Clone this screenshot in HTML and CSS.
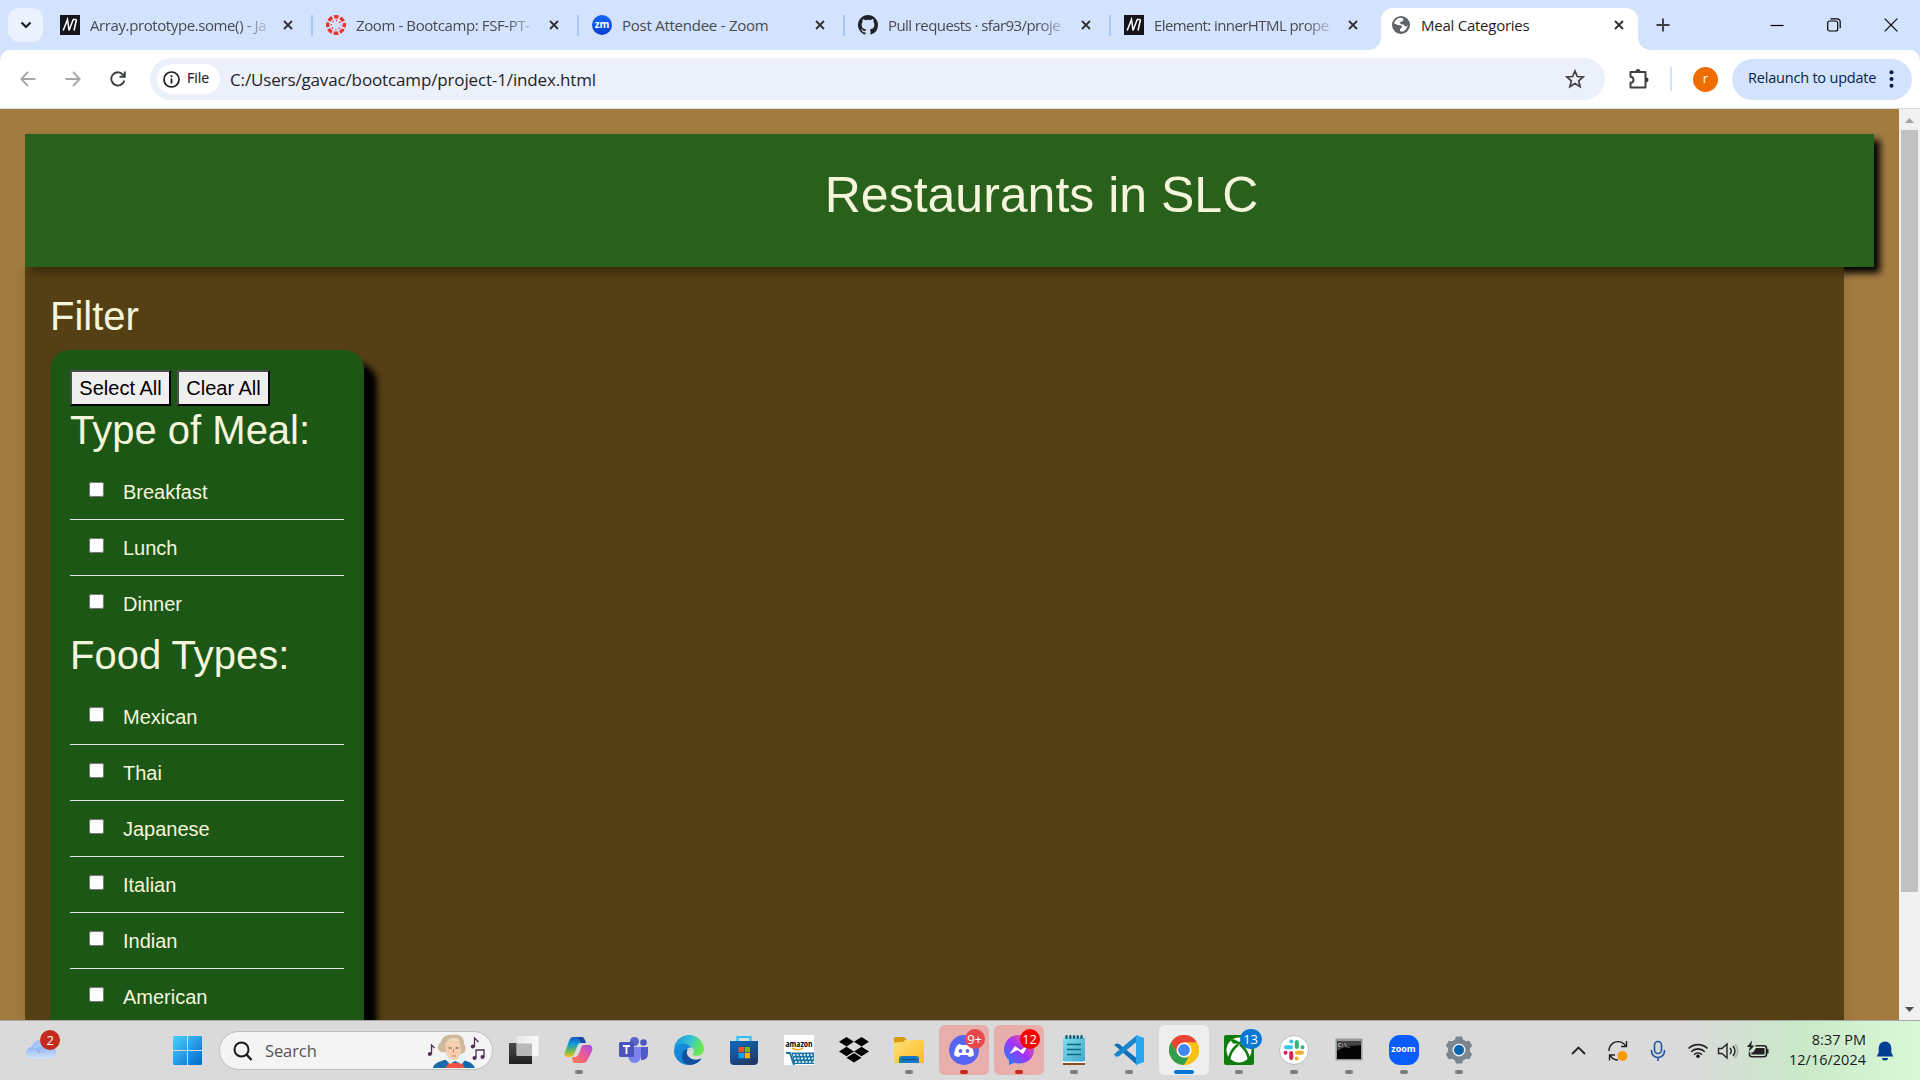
FILE: index.html
```html
<!DOCTYPE html>
<html lang="en">
<head>
<meta charset="utf-8">
<title>Meal Categories</title>
<link rel="stylesheet" href="styles.css">
</head>
<body>
<svg width="0" height="0" class="defs">
  <defs>
    <symbol id="x" viewBox="0 0 10 10"><path d="M1 1l8 8M9 1l-8 8" stroke="currentColor" stroke-width="1.8"/></symbol>
    <symbol id="mdn" viewBox="0 0 20 20"><path fill="#15141a" d="M0 0h20v20H0z"/><path d="M3.200 15.500L7.500 4.500L9 15.500L13.200 4.500M16.500 4.500L14 15.500M12.800 4.500h3.700" fill="none" stroke="#fff" stroke-width="1.5"/></symbol>
    <linearGradient id="win" x1="0" y1="0" x2="1" y2="1"><stop offset="0" stop-color="#4cd0fb"/><stop offset="1" stop-color="#0069d0"/></linearGradient>
    <linearGradient id="cloud" x1="0" y1="0" x2="0" y2="1"><stop offset="0" stop-color="#84aef0"/><stop offset="1" stop-color="#d5e4fc"/></linearGradient>
    <linearGradient id="cloud2" x1="0" y1="0" x2="1" y2="1"><stop offset="0" stop-color="#8fb4ef"/><stop offset="1" stop-color="#cfe0fb"/></linearGradient>
    <linearGradient id="tvb" x1="0" y1="0" x2="0" y2="1"><stop offset="0" stop-color="#4a4a4a"/><stop offset="1" stop-color="#202020"/></linearGradient>
    <linearGradient id="tv" x1="0" y1="0" x2="1" y2="0"><stop offset="0" stop-color="#e8e8e8"/><stop offset="1" stop-color="#fafafa"/></linearGradient>
    <linearGradient id="cpa" x1="0" y1="0" x2="0" y2="1"><stop offset="0" stop-color="#1857c9"/><stop offset=".35" stop-color="#159bd8"/><stop offset=".7" stop-color="#6fbd54"/><stop offset="1" stop-color="#f4c51c"/></linearGradient>
    <linearGradient id="cpb" x1="1" y1="0" x2="0" y2="1"><stop offset="0" stop-color="#a34de8"/><stop offset=".5" stop-color="#ea5b9b"/><stop offset="1" stop-color="#ff8038"/></linearGradient>
    <linearGradient id="edg" x1="0" y1="0" x2="1" y2=".3"><stop offset="0" stop-color="#168fd6"/><stop offset=".55" stop-color="#35c1d8"/><stop offset="1" stop-color="#6bea50"/></linearGradient>
    <linearGradient id="edb" x1="0" y1="0" x2="1" y2="1"><stop offset="0" stop-color="#1894e0"/><stop offset="1" stop-color="#0c6bc8"/></linearGradient>
    <linearGradient id="sto" x1="0" y1="0" x2=".6" y2="1"><stop offset="0" stop-color="#0a6bc2"/><stop offset="1" stop-color="#223a6a"/></linearGradient>
    <linearGradient id="fol" x1="0" y1="0" x2="1" y2="1"><stop offset="0" stop-color="#ffe07a"/><stop offset="1" stop-color="#fdbb1f"/></linearGradient>
    <linearGradient id="mes" x1="1" y1="0" x2="0" y2="1"><stop offset="0" stop-color="#ff5f72"/><stop offset=".5" stop-color="#a033ff"/><stop offset="1" stop-color="#0a8dff"/></linearGradient>
    <linearGradient id="note" x1="0" y1="0" x2="1" y2="1"><stop offset="0" stop-color="#7fdcec"/><stop offset="1" stop-color="#3eaacb"/></linearGradient>
  </defs>
</svg>

<header class="tabstrip">
  <div class="tab-search"><svg width="12" height="8" viewBox="0 0 12 8"><path d="M1.500 1.500L6 6l4.500-4.500" fill="none" stroke="#1f1f1f" stroke-width="2.200"/></svg></div>
  <div class="tabs">
    <div class="tab"><svg class="fav"><use href="#mdn"/></svg><span class="tt fade">Array.prototype.some() - Ja</span><svg class="cl"><use href="#x"/></svg></div>
    <div class="tab"><svg class="fav" viewBox="0 0 20 20"><circle cx="10" cy="10" r="8.300" fill="none" stroke="#e9342a" stroke-width="3.400" stroke-dasharray="4.700 1.818" stroke-dashoffset="2.350"/><circle cx="10" cy="10" r="4.600" fill="none" stroke="#e9342a" stroke-width="1.400" stroke-dasharray="1.300 2.313" stroke-dashoffset=".650"/></svg><span class="tt fade">Zoom - Bootcamp: FSF-PT-</span><svg class="cl"><use href="#x"/></svg></div>
    <div class="tab"><span class="fav zm">zm</span><span class="tt wide">Post Attendee - Zoom</span><svg class="cl"><use href="#x"/></svg></div>
    <div class="tab"><svg class="fav" viewBox="0 0 16 16"><path fill="#1f2328" d="M8 0C3.580 0 0 3.580 0 8c0 3.540 2.290 6.530 5.470 7.590.4.070.55-.17.55-.38v-1.340c-2.230.48-2.690-1.070-2.690-1.070-.36-.92-.89-1.170-.89-1.170-.73-.5.060-.49.060-.49.8.060 1.220.830 1.220.830.720 1.230 1.880.870 2.340.670.070-.52.280-.87.510-1.070-1.780-.2-3.640-.89-3.640-3.950 0-.87.310-1.590.820-2.150-.08-.2-.36-1.020.080-2.120 0 0 .67-.21 2.200.820A7.700 7.700 0 018 3.870c.68 0 1.360.090 2 .26 1.530-1.040 2.200-.82 2.200-.82.440 1.100.160 1.920.080 2.120.510.560.820 1.270.820 2.150 0 3.070-1.870 3.750-3.650 3.950.290.250.540.730.540 1.480v2.200c0 .21.150.46.550.38A8 8 0 0016 8c0-4.420-3.580-8-8-8z"/></svg><span class="tt fade tight">Pull requests · sfar93/proje</span><svg class="cl"><use href="#x"/></svg></div>
    <div class="tab last"><svg class="fav"><use href="#mdn"/></svg><span class="tt fade tight">Element: innerHTML prope</span><svg class="cl"><use href="#x"/></svg></div>
    <div class="tab active"><svg class="globe" viewBox="0 0 18 18"><circle cx="9" cy="9" r="9" fill="#5f6368"/><path fill="#fff" d="M8 1.800l3 .4.500 1.800-1.500 1.500-2 .5.500 2 3 .5 1 1.500 2 .5 1.200-1.500c-.3 3-2.500 6-5.700 6.800l-2-.8V13l2-1.500-.5-2L6 9 2 7.500c.6-2.500 2.700-5 6-5.700z"/></svg><span class="tt wide">Meal Categories</span><svg class="cl"><use href="#x"/></svg></div>
  </div>
  <svg class="plus" viewBox="0 0 14 14"><path d="M7 .5v13M.5 7h13" stroke="#3c4043" stroke-width="1.900"/></svg>
  <div class="winctl">
    <svg width="14" height="14"><path d="M.5 7.500h13" stroke="#000" stroke-width="1.200"/></svg>
    <svg width="14" height="14"><rect x=".7" y="3" width="10" height="10" rx="2" fill="none" stroke="#000" stroke-width="1.200"/><path d="M3.500.8h6.700a3 3 0 013 3v6.400" fill="none" stroke="#000" stroke-width="1.200"/></svg>
    <svg width="14" height="14"><path d="M.7.700l12.600 12.600M13.300.700L.7 13.300" stroke="#000" stroke-width="1.200"/></svg>
  </div>
</header>

<nav class="toolbar">
  <div class="navs">
    <svg width="16" height="16"><path d="M15.500 8H1.500M8 1L1.200 8 8 15" fill="none" stroke="#a5a7aa" stroke-width="1.800"/></svg>
    <svg width="16" height="16"><path d="M.5 8h14M8 1l6.800 7L8 15" fill="none" stroke="#a5a7aa" stroke-width="1.800"/></svg>
    <svg width="16" height="16"><path d="M14.300 9.500A6.600 6.600 0 1112.800 3.500L14.300 5M14.800.5v5.300H9.500" fill="none" stroke="#3c4043" stroke-width="1.900"/></svg>
  </div>
  <div class="omnibox">
    <div class="chip"><svg width="17" height="17"><circle cx="8.500" cy="8.500" r="7.500" fill="none" stroke="#1f1f1f" stroke-width="1.700"/><path d="M8.500 7.500v5M8.500 4.300v1.900" stroke="#1f1f1f" stroke-width="1.800"/></svg><span>File</span></div>
    <span class="url">C:/Users/gavac/bootcamp/project-1/index.html</span>
    <svg class="star" viewBox="0 0 20 20"><path d="M10 2l2.300 5.500 5.900.5-4.500 3.900 1.400 5.800L10 14.600l-5.100 3.100 1.400-5.800L1.800 8l5.900-.5z" fill="none" stroke="#3c4043" stroke-width="1.700"/></svg>
  </div>
  <svg class="puzzle" viewBox="0 0 22 22"><path d="M2.500 4h15v15.500h-15v-4.700c4-.3 4-5.800 0-6.100z" fill="none" stroke="#3c4043" stroke-width="2" stroke-linejoin="round"/><path d="M7.500 4a2.500 3 0 015 0zM17.500 9.200a3 2.600 0 010 5.200z" fill="#3c4043"/></svg>
  <i class="sep"></i>
  <div class="avatar">r</div>
  <div class="relaunch"><span>Relaunch to update</span><svg width="5" height="18"><g fill="#041e49"><circle cx="2.500" cy="2.300" r="2"/><circle cx="2.500" cy="9" r="2"/><circle cx="2.500" cy="15.700" r="2"/></g></svg></div>
</nav>

<div class="viewport">
  <div class="page">
    <div class="banner"><h1>Restaurants in SLC</h1></div>
    <main>
      <h2 class="filter-title">Filter</h2>
      <form class="card">
        <div class="buttons"><button type="button">Select All</button><button type="button">Clear All</button></div>
        <h2>Type of Meal:</h2>
        <ul>
          <li><input type="checkbox"><span>Breakfast</span></li>
          <li><input type="checkbox"><span>Lunch</span></li>
          <li><input type="checkbox"><span>Dinner</span></li>
        </ul>
        <h2>Food Types:</h2>
        <ul>
          <li><input type="checkbox"><span>Mexican</span></li>
          <li><input type="checkbox"><span>Thai</span></li>
          <li><input type="checkbox"><span>Japanese</span></li>
          <li><input type="checkbox"><span>Italian</span></li>
          <li><input type="checkbox"><span>Indian</span></li>
          <li><input type="checkbox"><span>American</span></li>
        </ul>
      </form>
    </main>
  </div>
  <div class="scrollbar">
    <svg width="21" height="21"><path d="M6 14l4.500-5 4.500 5z" fill="#a3a3a3"/></svg>
    <i class="thumb"></i>
    <svg width="21" height="21"><path d="M6 8l4.500 5L15 8z" fill="#505050"/></svg>
  </div>
</div>

<footer class="taskbar">
  <div class="weather"><svg width="32" height="22"><path d="M6 13C6 6 10 2 15.500 2S24 6 24.500 10z" fill="url(#cloud2)"/><path d="M7 21a6 6 0 01-6-6 6 6 0 0110-4.500 8 8 0 018-1.500 7 7 0 0112 5.500c0 4-3 6.500-6.500 6.500z" fill="url(#cloud)"/><path d="M11 10.500c2 1 3 2.500 3.500 4.500" fill="none" stroke="#86aeee" stroke-width="1.300"/></svg><b class="badge red">2</b></div>
  <svg class="start" width="29" height="29"><path d="M1 0h13v14H0V1zM15 0h13l1 1v13H15zM0 15h14v14H1l-1-1zM15 15h14v13l-1 1H15z" fill="url(#win)"/></svg>
  <div class="search">
    <svg width="20" height="20"><circle cx="8.500" cy="8.500" r="7" fill="none" stroke="#1b1b1b" stroke-width="2"/><path d="M13.500 13.500l5 5.500" stroke="#1b1b1b" stroke-width="2.400"/></svg>
    <span>Search</span>
    <svg class="bust" width="60" height="36" viewBox="0 0 60 36">
      <path d="M6 35c1-5 6-6 11-8h18c6 1 11 3 13 8z" fill="#1769aa"/><path d="M18 35l4-5h13l3 5z" fill="#f0533f"/><path d="M16 24l7 7 5-3 7 3 5-7-5-3H20z" fill="#e9f3fa"/>
      <path d="M14 19c-5-3-3-8 0-10C15 3 21 1 26 2c7-2 12 4 11 9 3 4 2 9-3 10z" fill="#cdbb9c"/><path d="M18 11c3-4 12-5 15-1l1 8c-1 5-3 9-7 9s-8-4-8-9z" fill="#f5cfb0"/><path d="M18 12c2-6 8-4 15-4-2-4-12-5-15 4z" fill="#ebdcc0"/><path d="M21.500 15h3M28.500 15h3" stroke="#6b4a3c" stroke-width="1.200"/><path d="M26.500 16v3.500M25 23h4" stroke="#c98266"/>
      <g stroke="#4c3050" fill="none" stroke-width="1.300"><path d="M4.500 21v-9l3 3"/><path d="M47.500 14V5l4 4"/><path d="M49 25v-8h8v7"/></g><g fill="#4c3050"><circle cx="2.800" cy="21" r="2"/><circle cx="45.800" cy="13.500" r="2"/><circle cx="47.500" cy="25" r="2"/><circle cx="55.500" cy="24" r="2"/></g>
    </svg>
  </div>
  <div class="apps">
    <div class="app"><svg viewBox="0 0 30 30"><path d="M0 8h23v21H0z" fill="url(#tvb)"/><rect x="7.500" y="1" width="22" height="20" rx="1" fill="url(#tv)"/><path d="M8 8.500h15V21H8z" fill="#b9b9b9"/></svg></div>
    <div class="app run"><svg viewBox="0 0 30 30"><path d="M9 2h8c3 0 3 3 4 6h-4c-2 0-3 1-4 4l-3 7c-1 2-2 3-4 3H4c-3 0-4-2-3-5L5 6c1-3 2-4 4-4z" fill="url(#cpa)"/><path d="M14 2h4c2 0 3 3 4 6h-5l-3-6z" fill="#1747a8"/><path d="M20 10h5c3 0 4 3 3 6l-4 8c-1 2-2 4-5 4h-8c-2 0-3-3-3-6 4 1 6-1 7-4l2-5c.6-2 1-3 3-3z" fill="url(#cpb)"/></svg></div>
    <div class="app"><svg viewBox="0 0 30 30"><circle cx="15.500" cy="6.500" r="4.500" fill="#5b62c9"/><circle cx="24.500" cy="7.500" r="3.300" fill="#4f56bd"/><path d="M22 12h7v7a6 6 0 01-7 6z" fill="#5059c9"/><path d="M9 12h13v8c0 5-3 8-6.500 8S9 25 9 20z" fill="#7b83eb"/><rect y="7" width="15" height="15" rx="1.500" fill="#4b53bc"/><path d="M4 11h7M7.500 11v8" stroke="#fff" stroke-width="1.800"/></svg></div>
    <div class="app"><svg viewBox="0 0 30 30"><path d="M.2 13A15 15 0 0130 13.500c0 4.500-3 7.300-7.500 7.300-3 0-4.800-1-3.800-2.800 2-4-1-8-7-8C7 10 2 11 .2 13z" fill="url(#edg)"/><path d="M0 16C0 10 5 8 10 8.500c5 .5 9 4 9.200 7.500-2-3-6-2-6.500 1.500-.5 5 5 9 12 7.500l2.500-1C25 27 20 30 15 30 7 30 0 24 0 16z" fill="url(#edb)"/><path d="M13 13.500c-5 3-6 8-3.500 12.500 2 3 5 4 8 3.800 4-.5 8-3 10.200-6.500-5 2.500-11 1.500-13.700-2.300-1.500-2.200-1.800-5-1-7.500z" fill="#114f9b"/><path d="M13.500 14.500c2-2.500 5.500-1 5.600 1.500 0 1-.6 1.600-.6 2.500" fill="none" stroke="#dadada" stroke-width="1.600"/></svg></div>
    <div class="app"><svg viewBox="0 0 30 30"><path d="M8.500 8V2h13v6" fill="none" stroke="#32c1f3" stroke-width="2.200"/><path d="M1 6h28v20q0 4-4 4H5q-4 0-4-4z" fill="url(#sto)"/><path fill="#f25022" d="M9.500 12H15v5.300H9.500z"/><path fill="#7fba00" d="M15.700 12H21v5.300h-5.300z"/><path fill="#00a4ef" d="M9.500 18H15v5.300H9.500z"/><path fill="#ffb900" d="M15.700 18H21v5.300h-5.300z"/></svg></div>
    <div class="app"><svg viewBox="0 0 30 30"><path d="M0 0h30v30H0z" fill="#fff"/><text x="1.500" y="11.500" class="amazon" textLength="27" lengthAdjust="spacingAndGlyphs">amazon</text><path d="M8 13c4 2.500 8 2 11 0" stroke="#f90" fill="none" stroke-width="1.300"/><path d="M2 18h4l4 12" fill="none" stroke="#1c76a8" stroke-width="2"/><path d="M7.500 17.500H30V29H10z" fill="#1c76a8"/><path d="M9 20h21M10 23.500h20M11 27h19" stroke="#fff" stroke-width="1.700" stroke-dasharray="2 1.500"/></svg></div>
    <div class="app"><svg viewBox="0 0 30 30"><path d="M7.500 2l7.500 4.800-7.500 4.800L0 6.800zM22.500 2L30 6.800l-7.500 4.800L15 6.800zM0 16.500l7.500-4.800 7.500 4.800-7.500 4.800zM30 16.500l-7.500-4.800-7.500 4.800 7.500 4.800zM7.500 22.700l7.500-4.800 7.500 4.800-7.500 4.800z"/></svg></div>
    <div class="app run"><svg viewBox="0 0 30 30"><path d="M0 9V3.500Q0 2 1.500 2H10l3 3h-2L9 8z" fill="#d89b10"/><path d="M0 7.500L9 7l3-2h16.500Q30 5 30 6.500V28H0z" fill="url(#fol)"/><path d="M5 28v-4q0-3 3-3h14q3 0 3 3v4z" fill="#1479c5"/><path d="M8 24.500h14" stroke="#0d5697" stroke-width="1.500"/></svg></div>
    <div class="app run alert"><svg viewBox="0 0 30 30"><circle cx="15" cy="15" r="15" fill="#5865f2"/><path d="M10 9q-4 2-5 11 2 2 5 2l1.500-2h7L20 22q3 0 5-2-1-9-5-11l-3 1h-4z" fill="#fff"/><circle cx="11.500" cy="16" r="1.900" fill="#5865f2"/><circle cx="18.500" cy="16" r="1.900" fill="#5865f2"/></svg><b class="badge soft">9+</b></div>
    <div class="app run alert"><svg viewBox="0 0 30 30"><path d="M15 0C6 0 0 6.500 0 14.500c0 4.500 2 8 5 10.500v5l5-2.300c1.600.5 3.300.8 5 .8 9 0 15-6 15-14S24 0 15 0z" fill="url(#mes)"/><path d="M5.500 19L11 11l5.500 4L24 10.500 19 19l-5.500-4z" fill="#fff"/></svg><b class="badge bright">12</b></div>
    <div class="app run"><svg viewBox="0 0 30 30"><path d="M4 26h22v4H4z" fill="#8a4b17"/><path d="M4 25.500h22V28H4z" fill="#fff"/><rect x="4" y="2.500" width="22" height="24" rx="1.500" fill="url(#note)"/><path d="M8 9.500h14M8 14.500h14M8 19.500h14" stroke="#0d6684" stroke-width="1.700"/><path d="M7.500 1.200v1.600M11.300 1.200v1.600M15 1.200v1.600M18.700 1.200v1.600M22.500 1.200v1.600" stroke="#145b77" stroke-width="2.400" stroke-linecap="round"/></svg></div>
    <div class="app run"><svg viewBox="0 0 30 30"><path d="M0 10.500l2-2 3 .5 18 14.500V30L1.500 11z" fill="#0c6fb8"/><path d="M0 19.500l2 2.200 3-.5L23 6.500V0L1.500 18z" fill="#1786ce"/><path d="M22 0l8 3v24l-8 3z" fill="#2aa5ee"/></svg></div>
    <div class="app run current"><svg viewBox="0 0 30 30"><circle cx="15" cy="15" r="15" fill="#fbc116"/><path d="M2 7.500A15 15 0 0128 7.500H15L8.500 18.800z" fill="#ea4335"/><path d="M2 7.500l6.500 11.300L15 22.500h6.500L15 30A15 15 0 012 7.500z" fill="#2f9e4f"/><path d="M15 7.500h13A15 15 0 0115 30l6.500-11.300z" fill="#fbc116"/><circle cx="15" cy="15" r="7.500" fill="#fff"/><circle cx="15" cy="15" r="5.900" fill="#4285f4"/></svg></div>
    <div class="app run"><svg viewBox="0 0 30 30"><rect width="30" height="30" rx="2" fill="#107c10"/><circle cx="15" cy="15" r="12.500" fill="#fff"/><path d="M6.500 5C9 3 12 5 15 7c3-2 6-4 8.500-2l-3 4C17 8 16 9 15 10c-1-1-2-2-5.500-1z" fill="#107c10"/><path d="M14 9.500C9.500 13 6 18.500 5 24.500M16 9.500c4.500 3.500 8 9 9 15" fill="none" stroke="#107c10" stroke-width="2.600"/></svg><b class="badge blue">13</b></div>
    <div class="app run"><svg viewBox="0 0 30 30"><circle cx="15" cy="15" r="14.500" fill="#fff" stroke="#bbb"/><g stroke-width="4" stroke-linecap="round"><path d="M7 12.200h5M12.300 6.500h0" stroke="#36c5f0"/><path d="M17.800 7v5M23.500 12.300h0" stroke="#2eb67d"/><path d="M12.200 18v5M6.500 17.700h0" stroke="#e01e5a"/><path d="M18 17.800h5M17.700 23.500h0" stroke="#ecb22e"/></g></svg></div>
    <div class="app run"><svg viewBox="0 0 30 30"><path d="M1.500 3.500h27v22h-27z" fill="#9a9a9a"/><path d="M3 6h24v18H3z" fill="#050505"/><path d="M3 6h24v4C16 11 8 12 3 16z" fill="#444"/><text x="4" y="11.500" class="prompt">C:\_</text></svg></div>
    <div class="app run"><span class="zoomapp">zoom</span></div>
    <div class="app run"><svg viewBox="0 0 30 30"><g fill="#7b858e"><circle cx="15" cy="15" r="11"/><path id="tooth" d="M10.500 6l1.500-4.500h6L19.500 6v18L18 28.500h-6L10.500 24z"/><use href="#tooth" transform="rotate(60 15 15)"/><use href="#tooth" transform="rotate(120 15 15)"/></g><circle cx="15" cy="15" r="6.500" fill="#e5ebef"/><circle cx="15" cy="15" r="5" fill="#0b64b0"/></svg></div>
  </div>
  <div class="tray">
    <svg width="40" height="24"><path d="M14 15l6.500-6.500L27 15" fill="none" stroke="#222" stroke-width="1.800"/></svg>
    <svg width="40" height="24"><g fill="none" stroke="#222" stroke-width="1.400"><path d="M11 12a9 9 0 0117-4.500M28.500 2v5.500H23M20 21c-3 0-6-1.500-8-4.500M11.500 21.500V16H17"/></g><circle cx="24.500" cy="17" r="5" fill="#ff9800"/></svg>
    <svg width="40" height="24"><g fill="none" stroke="#1b55a5" stroke-width="1.600"><rect x="16.500" y="2.500" width="7" height="12" rx="3.500"/><path d="M13.500 11v1a6.500 6.500 0 0013 0v-1M20 18.500V22"/></g></svg>
    <svg width="110" height="24"><g fill="none" stroke="#222" stroke-width="1.600"><path d="M10.500 9.500a13.500 13.500 0 0119 0M13.200 12.700a9.600 9.600 0 0113.600 0M16 15.700a5.600 5.600 0 018 0"/><path d="M40.500 9.500h3.500l5-4.500v14l-5-4.500h-3.500zM52 9q2.500 3 0 6M55 7q4 5 0 10" stroke-width="1.400"/><path d="M57 5q5.500 7 0 14" stroke="#aaa" stroke-width="1.400"/><path d="M77.500 6.700H86q2.500 0 2.500 2.500v6q0 2.500-2.500 2.500H74q-2.500 0-2.500-2.500v-2"/></g><circle cx="20" cy="17.300" r="1.700"/><path d="M78 9h8.500v6.500h-13V13l1.500.5zM89 10h1.500v4.500H89z" fill="#222"/><path d="M74 1.500l-5 6.500h3l-1.500 5 6-6.500h-3.200z" fill="#222"/></svg>
  </div>
  <div class="clock"><span>8:37 PM</span><span>12/16/2024</span></div>
  <svg class="bell" width="18" height="20"><path d="M9 .500a6.300 6.300 0 016.300 6.300v4.700l2 4H.7l2-4V6.800A6.300 6.300 0 019 .5zM6 17h6a3 2.500 0 01-6 0z" fill="#003e92"/></svg>
</footer>
</body>
</html>
```
FILE: styles.css
```css
* { box-sizing: border-box; }
body {
  margin: 0;
  width: 1920px;
  height: 1080px;
  overflow: hidden;
  display: flex;
  flex-direction: column;
  font-family: "Open Sans", "Noto Sans", sans-serif;
  background: #d3e2fd;
}
svg { display: block; flex: none; }
.defs { position: absolute; }

/* tab strip */
.tabstrip { height: 50px; flex: none; display: flex; align-items: center; padding-left: 8px; }
.tab-search { width: 35px; height: 34px; border-radius: 11px; background: #ebf1fd; display: grid; place-items: center; flex: none; }
.tabs { display: flex; align-items: flex-end; height: 50px; margin-left: 4px; }
.tab { width: 266px; height: 42px; padding: 0 20px 8px 13px; display: flex; align-items: center; color: #474b50; position: relative; }
.tab::after { content: ""; position: absolute; right: 0; top: 7px; width: 2px; height: 21px; background: #a8c7fa; }
.tab.last { width: 270px; padding-right: 23px; }
.tab.last::after { display: none; }
.tab.active { width: 257px; padding: 0 14px 8px 11px; background: #fff; border-radius: 12px 12px 0 0; color: #1f1f1f; }
.tab.active::before, .tab.active::after { content: ""; position: absolute; top: auto; bottom: 0; width: 12px; height: 12px; }
.tab.active::before { left: -12px; background: radial-gradient(circle at 0 0, transparent 11.5px, #fff 12px); }
.tab.active::after { right: -12px; background: radial-gradient(circle at 100% 0, transparent 11.5px, #fff 12px); }
.fav { width: 20px; height: 20px; flex: none; margin-right: 10px; }
.globe { width: 18px; height: 18px; margin-right: 11px; }
.zm { border-radius: 50%; background: linear-gradient(#1467ff, #073fd0); color: #fff; font: bold 10px/18px "Open Sans", sans-serif; text-align: center; }
.tt { font-size: 15px; line-height: 20px; letter-spacing: -.4px; white-space: nowrap; margin-right: auto; }
.wide { letter-spacing: -.25px; }
.tight { letter-spacing: -.58px; }
.fade { mask-image: linear-gradient(90deg, #000 150px, rgba(0, 0, 0, .15) 178px); }
.cl { width: 10px; height: 10px; color: #303030; }
.plus { width: 14px; height: 14px; margin-left: 18px; }
.winctl { margin-left: auto; display: flex; gap: 43px; padding-right: 22px; }

/* toolbar */
.toolbar { height: 59px; flex: none; background: #fff; border-bottom: 1px solid #d9dce1; border-radius: 10px 10px 0 0; display: flex; align-items: center; padding: 0 8px 0 20px; }
.navs { display: flex; gap: 29px; width: 130px; }
.omnibox { width: 1455px; height: 42px; border-radius: 21px; background: #ebf0fa; display: flex; align-items: center; padding: 0 20px 0 7px; }
.chip { width: 63px; height: 30px; border-radius: 15px; background: #fff; display: flex; align-items: center; gap: 7px; padding-left: 6px; font-size: 14px; line-height: 18px; color: #1f1f1f; }
.chip span { margin-top: -2px; -webkit-text-stroke: .2px; }
.url { margin-left: 10px; font-size: 17px; color: #1f1f1f; letter-spacing: -.14px; }
.star { width: 20px; height: 20px; margin-left: auto; }
.puzzle { width: 22px; height: 22px; margin-left: 23px; }
.sep { width: 2px; height: 24px; background: #d3e3fd; margin-left: 20px; }
.avatar { width: 25px; height: 25px; border-radius: 50%; background: #ef6c00; color: #fff; font-size: 13px; line-height: 23px; text-align: center; margin-left: 21px; }
.relaunch { width: 180px; height: 41px; border-radius: 21px; background: #d3e3fd; margin-left: auto; display: flex; align-items: center; justify-content: space-between; padding: 0 18px 0 16px; color: #041e49; font-size: 14.5px; line-height: 20px; letter-spacing: -.2px; white-space: nowrap; }
.relaunch span { margin-top: -2px; }

/* page */
.viewport { height: 911px; flex: none; display: flex; overflow: hidden; background: #a27b40; }
.page { width: 1899px; padding: 25px; font-family: "Liberation Sans", Arial, sans-serif; color: beige; overflow: hidden; }
.banner { height: 133px; background: #29601c; box-shadow: 6px 6px 7px #000; display: flex; justify-content: center; }
h1, h2 { margin: 0; font-weight: 400; }
h1 { font-size: 50px; line-height: 60px; }
.banner h1 { margin: 31px 0 0 184px; }
main { width: 1819px; height: 900px; padding: 25px; background: rgba(70, 52, 12, .83); box-shadow: 0 0 12px rgba(0, 0, 0, .12); position: relative; clip-path: inset(0 -12px -12px -12px); }
h2 { font-size: 40px; line-height: 46px; height: 57px; }
.filter-title { line-height: 48px; height: 58px; }
.card { width: 314px; height: 800px; padding: 20px; background: #1c5716; border-radius: 20px; box-shadow: 13px 13px 6px #000; }
.buttons { display: flex; gap: 6px; height: 37px; }
button { width: 101px; height: 36px; padding: 0; font: 20px "Liberation Sans", Arial, sans-serif; color: #000; background: #efefef; border: 2px solid; border-color: #4c4c4c #000 #000 #4c4c4c; border-radius: 0; }
button + button { width: 93px; }
ul { list-style: none; margin: 0; padding: 0; }
li { height: 56px; border-bottom: 1px solid #dee2e6; display: flex; align-items: flex-start; padding: 17px 19px 0; font-size: 20px; line-height: 23px; }
li:last-child { border: 0; }
li input { width: 15px; height: 15px; margin: 1px 19px 0 0; }

.scrollbar { width: 21px; background: #f1f1f1; display: flex; flex-direction: column; align-items: center; }
.thumb { width: 17px; height: 762px; background: #c1c1c1; }
.scrollbar svg:last-child { margin-top: auto; }

/* taskbar */
.taskbar { height: 60px; flex: none; border-top: 1px solid #a9a9a9; background: linear-gradient(90deg, #dadada 1690px, #c9e9c9 1800px, #d8f8d8 1920px); display: flex; align-items: center; }
.weather { width: 173px; padding: 0 0 3px 25px; position: relative; }
.badge { position: absolute; min-width: 20px; height: 20px; border-radius: 10px; color: #fff; font-size: 13px; line-height: 20px; font-weight: 400; text-align: center; letter-spacing: -.3px; }
.weather .badge { left: 40px; top: -8px; }
.red { background: #c42b1c; }
.start { margin-right: 17px; }
.search { width: 274px; height: 39px; border-radius: 20px; background: #f4f4f4; border: 1px solid #bdbdbd; display: flex; align-items: center; padding: 0 5px 0 13px; color: #555; font-size: 16.5px; letter-spacing: -.1px; }
.search span { margin-left: 12px; }
.bust { margin-left: auto; }
.apps { display: flex; margin-left: 3px; }
.app { width: 50px; height: 50px; margin-left: 2.5px; margin-right: 2.5px; display: flex; justify-content: center; padding-top: 10px; position: relative; top: -.5px; border-radius: 6px; }
.app svg { width: 30px; height: 30px; }
.run::after { content: ""; position: absolute; left: 21px; bottom: 1px; width: 8px; height: 4px; border-radius: 2px; background: #7d7d7d; }
.alert { background: #e8aeab; }
.alert::after { background: #c42b1c; }
.current { background: #eeeeee; }
.current::after { left: 15px; width: 20px; background: #0878d4; }
.app .badge { left: 26px; top: 4px; }
.app .soft { background: #e9494b; }
.bright { background: #f00; }
.app .blue { background: #0878d4; min-width: 22px; }
.amazon { font: bold 8px "Open Sans", sans-serif; }
.prompt { font: 5px "Liberation Mono", monospace; fill: #fff; }
.zoomapp { width: 30px; height: 30px; border-radius: 11px; background: #0b5cff; color: #fff; font: bold 9px/27px "Open Sans", sans-serif; text-align: center; }
.tray { display: flex; margin-left: auto; }
.clock { width: 78px; display: flex; flex-direction: column; font-size: 14.5px; line-height: 20px; color: #1b1b1b; white-space: nowrap; align-items: flex-end; padding-bottom: 2px; }
.bell { margin: 0 26px 0 10px; }
```
